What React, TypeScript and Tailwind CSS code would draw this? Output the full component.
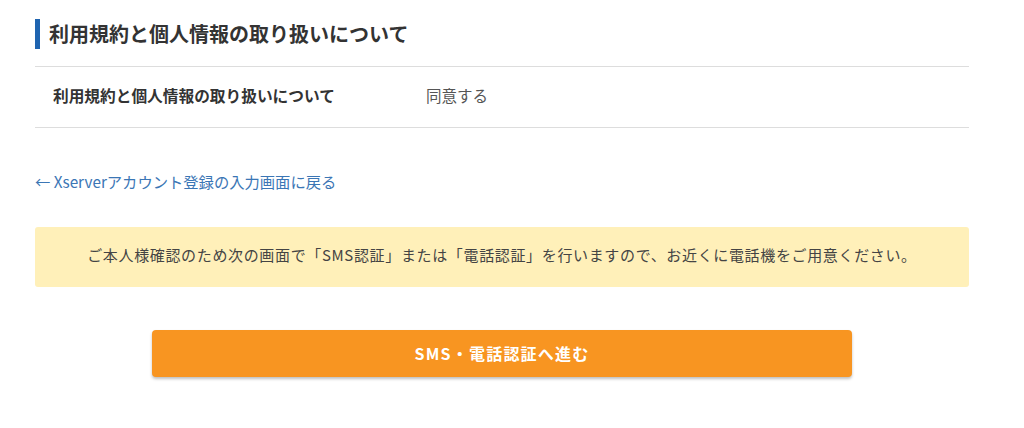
export default function App() {
  const font = { fontFamily: '"Noto Sans CJK JP", "Noto Sans", sans-serif' };
  return (
    <div className="w-[1024px] h-[428px] bg-white text-[#333333]" style={font}>
      <div className="ml-[35px] w-[934px] pt-[19px]">
        <div className="flex items-center h-[30px]">
          <div className="w-[5px] h-[30px] bg-[#1f64b0]" />
          <h2 className="ml-[9px] text-[20px] font-bold leading-none text-[#333333]">
            利用規約と個人情報の取り扱いについて
          </h2>
        </div>
        <div className="mt-[17px] border-t border-b border-[#dddddd] h-[62px] flex items-center">
          <div className="pl-[18px] w-[391px] text-[15.7px] font-bold pb-[2px]">
            利用規約と個人情報の取り扱いについて
          </div>
          <div className="text-[15.5px] text-[#555555] pb-[2px]">同意する</div>
        </div>
        <div className="mt-[43px] h-[22px] flex items-center">
          <a className="text-[15.3px] text-[#3b76b5] leading-none">← Xserverアカウント登録の入力画面に戻る</a>
        </div>
        <div className="mt-[34px] h-[60px] rounded-[3px] bg-[#fff0b9] flex items-center justify-center pb-[3px]">
          <p className="text-[15px] tracking-[0.65px] text-[#444444]">
            ご本人様確認のため次の画面で「SMS認証」または「電話認証」を行いますので、お近くに電話機をご用意ください。
          </p>
        </div>
        <div className="mt-[43px] flex justify-center">
          <button className="w-[700px] h-[47px] rounded-[4px] bg-[#f89521] text-white text-[16px] font-bold tracking-[1.2px] shadow-[0_2px_3px_rgba(0,0,0,0.25)] pb-[2px]">
            SMS・電話認証へ進む
          </button>
        </div>
      </div>
    </div>
  );
}
